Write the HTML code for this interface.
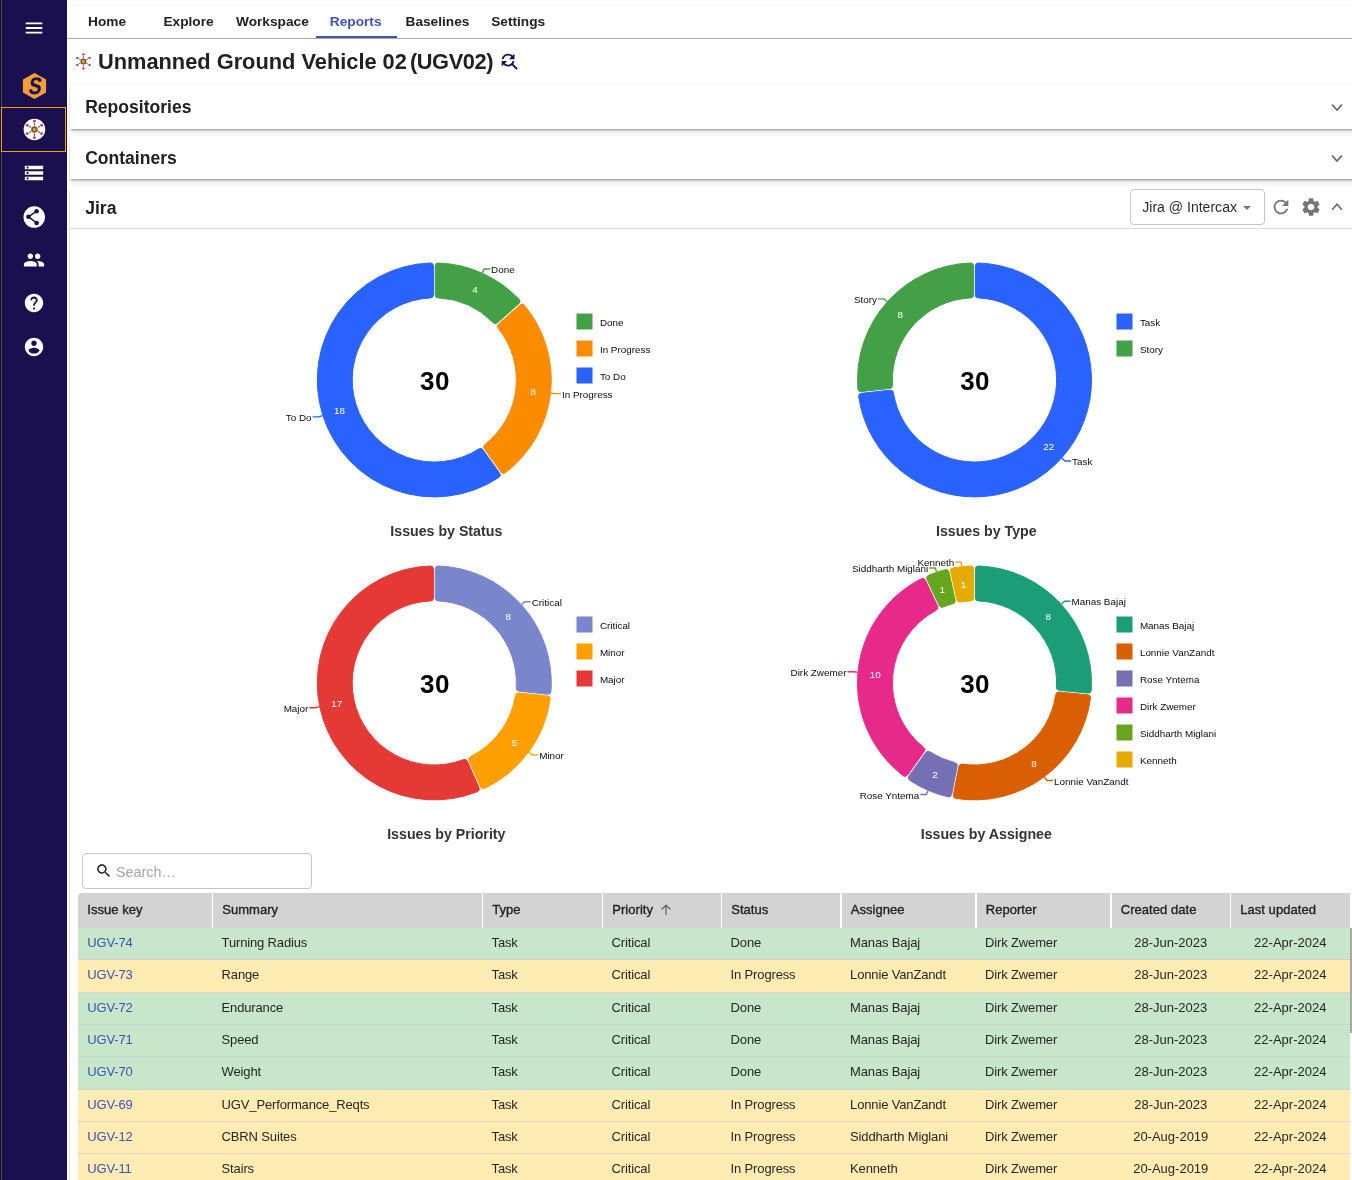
<!DOCTYPE html>
<html lang="en">
<head>
<meta charset="utf-8">
<title>Unmanned Ground Vehicle 02 (UGV02) - Reports</title>
<style>
*{box-sizing:border-box;margin:0;padding:0}
html,body{width:1352px;height:1180px;overflow:hidden;background:#fff}
body{font-family:"Liberation Sans",Arial,Helvetica,sans-serif;color:#212121;position:relative}
.abs{position:absolute}
#root{position:absolute;left:0;top:0;width:1352px;height:1180px;overflow:hidden;will-change:transform}
#sidebar{position:absolute;left:0;top:0;width:67px;height:1180px;background:#1a1050}
#sidebar .edge{position:absolute;left:0;top:0;width:1px;height:1180px;background:#141414}
#sidebar .edge2{position:absolute;left:1px;top:0;width:1px;height:1180px;background:#6f6a90;opacity:.55}
#sidebar .sel{position:absolute;left:1px;top:107px;width:65px;height:45px;border:1px solid #f5a000}
#nav{position:absolute;left:67px;top:0;width:1285px;height:39px;border-bottom:1px solid #a9a9a9;background:#fff}
#nav span{position:absolute;top:13.5px;font-size:13.7px;font-weight:bold;line-height:16px;color:#212121;white-space:nowrap}
#nav .act{color:#3f51b5}
#nav .ul{position:absolute;left:249px;top:36px;width:81px;height:2px;background:#3f51b5}
#topshade{position:absolute;left:69px;top:5px;width:1283px;height:1px;background:#f6f6f6}
#title{position:absolute;left:98px;top:48.8px;font-size:21.8px;font-weight:bold;line-height:26px;color:#212121;white-space:nowrap}
#title b{margin-left:-3px;letter-spacing:-.4px}
.panel{position:absolute;left:70px;width:1290px;background:#fff;box-shadow:0 2px 2px -1px rgba(0,0,0,.34),0 3px 5px 0 rgba(0,0,0,.13),0 0 2px 0 rgba(0,0,0,.1)}
.panel.first{border-radius:4px 4px 0 0}
.panel h3{position:absolute;left:15.2px;font-size:17.55px;font-weight:bold;line-height:20px;color:#212121}
#sel{position:absolute;left:1130px;top:189px;width:135px;height:36px;border:1px solid #c4c4c4;border-radius:4px;background:#fff}
#sel span{position:absolute;left:11.3px;top:8.5px;font-size:14.05px;line-height:17px;color:#2a2a2a;white-space:nowrap}
#sel i{position:absolute;left:112.3px;top:15.6px;width:0;height:0;border-left:4.4px solid transparent;border-right:4.4px solid transparent;border-top:4.6px solid #757575}
.ctitle{position:absolute;width:300px;text-align:center;font-size:14.2px;font-weight:bold;color:#333;line-height:16px;white-space:nowrap}
#search{position:absolute;left:82px;top:853px;width:230px;height:36px;border:1px solid #c4c4c4;border-radius:4px;background:#fff}
#search span{position:absolute;left:33px;top:9.5px;font-size:14.35px;line-height:17px;color:#a5a5a5}
.th-bg{position:absolute;background:#d3d3d3;border-radius:4px 0 0 0}
.th{position:absolute;font-size:13px;font-weight:normal;-webkit-text-stroke:.35px #222;letter-spacing:.05px;color:#222;padding-bottom:1.5px;display:flex;align-items:center;white-space:nowrap}
.vsep{position:absolute;width:1.5px;background:#fff}
.tr{position:absolute;border-bottom:1px solid rgba(200,200,215,.6)}
.tr.g{background:#c8e6c9}
.tr.y{background:#ffecb3}
.td{position:absolute;font-size:13px;letter-spacing:-.15px;color:#262626;padding-bottom:2.8px;display:flex;align-items:center;white-space:nowrap}
.td.lk{color:#3f51b5}
.td.ctr{justify-content:center;letter-spacing:0}
#scroll{position:absolute;left:1350px;top:927.6px;width:2px;height:105.6px;background:#a8a8a8}
svg text{font-family:"Liberation Sans",Arial,Helvetica,sans-serif}
</style>
</head>
<body>
<div id="root">
<div id="sidebar">
  <div class="edge"></div><div class="edge2"></div>
  <div class="sel"></div>
  <svg style="position:absolute;left:22.8px;top:16.85px" width="22" height="22" viewBox="0 0 24 24" ><path fill="#fff" d="M3 18h18v-2H3v2zm0-5h18v-2H3v2zm0-7v2h18V6H3z"/></svg>
  <svg style="position:absolute;left:21px;top:72px" width="27" height="28" viewBox="0 0 27 28"><path d="M13.5,1 L25.1,7.5 L25.1,20.5 L13.5,27 L1.9,20.5 L1.9,7.5 Z" fill="#f39c3c"/><text x="0" y="0" text-anchor="middle" font-size="24.5" font-weight="bold" fill="#1a1050" stroke="#1a1050" stroke-width=".25" transform="translate(13.4 22) skewX(-8) scale(.78 .97)">S</text></svg>
  <svg style="position:absolute;left:20.91px;top:116.21px" width="26.88" height="26.88" viewBox="-12 -12 24 24"><circle r="9.64" fill="#fff"/><path d="M0.00,-3.60L0.00,-5.60" stroke="#444" stroke-width="0.9"/><circle cx="0.00" cy="-7.40" r="1.25" fill="#c9344c"/><path d="M3.12,-1.80L4.85,-2.80" stroke="#444" stroke-width="0.9"/><circle cx="6.41" cy="-3.70" r="1.25" fill="#c9344c"/><path d="M3.12,1.80L4.85,2.80" stroke="#444" stroke-width="0.9"/><circle cx="6.41" cy="3.70" r="1.25" fill="#c9344c"/><path d="M0.00,3.60L0.00,5.60" stroke="#444" stroke-width="0.9"/><circle cx="0.00" cy="7.40" r="1.25" fill="#c9344c"/><path d="M-3.12,1.80L-4.85,2.80" stroke="#444" stroke-width="0.9"/><circle cx="-6.41" cy="3.70" r="1.25" fill="#c9344c"/><path d="M-3.12,-1.80L-4.85,-2.80" stroke="#444" stroke-width="0.9"/><circle cx="-6.41" cy="-3.70" r="1.25" fill="#c9344c"/><circle r="2.9" fill="#7a5a1e"/><circle r="1.4" fill="#f0964a"/></svg>
  <svg style="position:absolute;left:22.75px;top:162.2px" width="22" height="22" viewBox="0 0 24 24" ><path fill="#fff" d="M2 20h20v-4H2v4zm2-3h2v2H4v-2zM2 4v4h20V4H2zm4 3H4V5h2v2zm-4 7h20v-4H2v4zm2-3h2v2H4v-2z"/></svg>
  <svg style="position:absolute;left:0;top:195px" width="67" height="45" viewBox="0 195 67 45"><circle cx="34.25" cy="217.1" r="10.75" fill="#fff"/><path d="M36.6,211.3L28.45,216.7L36.6,223" fill="none" stroke="#1a1050" stroke-width="1.5"/><circle cx="28.45" cy="216.7" r="2.3" fill="#1a1050"/><circle cx="36.6" cy="211.3" r="2.3" fill="#1a1050"/><circle cx="36.6" cy="223" r="2.3" fill="#1a1050"/></svg>
  <svg style="position:absolute;left:22.9px;top:248.85px" width="22" height="22" viewBox="0 0 24 24" ><path fill="#fff" d="M16 11c1.66 0 2.99-1.34 2.99-3S17.66 5 16 5c-1.66 0-3 1.34-3 3s1.34 3 3 3zm-8 0c1.66 0 2.99-1.34 2.99-3S9.66 5 8 5C6.34 5 5 6.34 5 8s1.34 3 3 3zm0 2c-2.33 0-7 1.17-7 3.5V19h14v-2.5c0-2.33-4.67-3.5-7-3.5zm8 0c-.29 0-.62.02-.97.05 1.16.84 1.97 1.97 1.97 3.45V19h6v-2.5c0-2.33-4.67-3.5-7-3.5z"/></svg>
  <svg style="position:absolute;left:22.9px;top:291.8px" width="22" height="22" viewBox="0 0 24 24" ><path fill="#fff" d="M12 2C6.48 2 2 6.48 2 12s4.48 10 10 10 10-4.48 10-10S17.52 2 12 2zm1 17h-2v-2h2v2zm2.07-7.75l-.9.92C13.45 12.9 13 13.5 13 15h-2v-.5c0-1.1.45-2.1 1.17-2.83l1.24-1.26c.37-.36.59-.86.59-1.41 0-1.1-.9-2-2-2s-2 .9-2 2H8c0-2.21 1.79-4 4-4s4 1.79 4 4c0 .88-.36 1.68-.93 2.25z"/></svg>
  <svg style="position:absolute;left:22.9px;top:335.8px" width="22" height="22" viewBox="0 0 24 24" ><path fill="#fff" d="M12 2C6.48 2 2 6.48 2 12s4.48 10 10 10 10-4.48 10-10S17.52 2 12 2zm0 3c1.66 0 3 1.34 3 3s-1.34 3-3 3-3-1.34-3-3 1.34-3 3-3zm0 14.2c-2.5 0-4.71-1.28-6-3.22.03-1.99 4-3.08 6-3.08 1.99 0 5.97 1.09 6 3.08-1.29 1.94-3.5 3.22-6 3.22z"/></svg>
</div>
<div id="nav">
  <span style="left:21px">Home</span>
  <span style="left:96.4px">Explore</span>
  <span style="left:169px">Workspace</span>
  <span class="act" style="left:262.8px">Reports</span>
  <span style="left:338.5px">Baselines</span>
  <span style="left:424.2px">Settings</span>
  <div class="ul"></div>
</div>
<div id="topshade"></div>
<svg style="position:absolute;left:72.30px;top:50.20px" width="22.80" height="22.80" viewBox="-12 -12 24 24"><path d="M0.00,-3.60L0.00,-5.60" stroke="#444" stroke-width="0.9"/><circle cx="0.00" cy="-7.40" r="1.25" fill="#c9344c"/><path d="M3.12,-1.80L4.85,-2.80" stroke="#444" stroke-width="0.9"/><circle cx="6.41" cy="-3.70" r="1.25" fill="#c9344c"/><path d="M3.12,1.80L4.85,2.80" stroke="#444" stroke-width="0.9"/><circle cx="6.41" cy="3.70" r="1.25" fill="#c9344c"/><path d="M0.00,3.60L0.00,5.60" stroke="#444" stroke-width="0.9"/><circle cx="0.00" cy="7.40" r="1.25" fill="#c9344c"/><path d="M-3.12,1.80L-4.85,2.80" stroke="#444" stroke-width="0.9"/><circle cx="-6.41" cy="3.70" r="1.25" fill="#c9344c"/><path d="M-3.12,-1.80L-4.85,-2.80" stroke="#444" stroke-width="0.9"/><circle cx="-6.41" cy="-3.70" r="1.25" fill="#c9344c"/><circle r="2.5" fill="#f08c4a" stroke="#6b4a10" stroke-width="1.3"/></svg>
<div id="title">Unmanned Ground Vehicle 02 <b>(UGV02)</b></div>
<svg style="position:absolute;left:497.6px;top:49.7px" width="22" height="22" viewBox="0 0 24 24" ><path fill="#1a1050" d="M11 6c1.38 0 2.63.56 3.54 1.46L12 10h6V4l-2.05 2.05C14.68 4.78 12.93 4 11 4c-3.53 0-6.43 2.61-6.92 6H6.1c.46-2.28 2.48-4 4.9-4zm5.64 9.14c.66-.9 1.12-1.97 1.28-3.14H15.9c-.46 2.28-2.48 4-4.9 4-1.38 0-2.63-.56-3.54-1.46L10 12H4v6l2.05-2.05C7.32 17.22 9.07 18 11 18c1.55 0 2.98-.51 4.14-1.36L20 21.49 21.49 20l-4.85-4.86z"/></svg>
<div class="panel first" style="top:85px;height:44px"><h3 style="top:12px">Repositories</h3></div>
<div class="panel" style="top:136px;height:43px"><h3 style="top:12px">Containers</h3></div>
<div class="panel" id="jira" style="top:185.5px;height:1000px"><h3 style="top:12.2px">Jira</h3>
<div class="abs" style="left:0;top:42.5px;width:1290px;height:1px;background:#dcdcdc"></div>
</div>
<svg style="position:absolute;left:0;top:0;overflow:visible" width="1" height="1"><path d="M1332.10,104.60L1337.00,110.00L1341.90,104.60" fill="none" stroke="#666" stroke-width="1.6"/></svg> <svg style="position:absolute;left:0;top:0;overflow:visible" width="1" height="1"><path d="M1332.10,155.60L1337.00,161.00L1341.90,155.60" fill="none" stroke="#666" stroke-width="1.6"/></svg> <svg style="position:absolute;left:0;top:0;overflow:visible" width="1" height="1"><path d="M1332.10,209.70L1337.00,204.30L1341.90,209.70" fill="none" stroke="#666" stroke-width="1.6"/></svg>
<div id="sel"><span>Jira @ Intercax</span><i></i></div>
<svg style="position:absolute;left:1269.86px;top:195.77px" width="22" height="22" viewBox="0 0 24 24" ><path fill="#757575" d="M17.65 6.35C16.2 4.9 14.21 4 12 4c-4.42 0-7.99 3.58-7.99 8s3.57 8 7.99 8c3.73 0 6.84-2.55 7.73-6h-2.08c-.82 2.33-3.04 4-5.65 4-3.31 0-6-2.69-6-6s2.69-6 6-6c1.66 0 3.14.69 4.22 1.78L13 11h7V4l-2.35 2.35z"/></svg>
<svg style="position:absolute;left:1299.7px;top:195.5px" width="22" height="22" viewBox="0 0 24 24" ><path fill="#757575" d="M19.14 12.94c.04-.3.06-.61.06-.94 0-.32-.02-.64-.07-.94l2.03-1.58c.18-.14.23-.41.12-.61l-1.92-3.32c-.12-.22-.37-.29-.59-.22l-2.39.96c-.5-.38-1.03-.7-1.62-.94l-.36-2.54c-.04-.24-.24-.41-.48-.41h-3.84c-.24 0-.43.17-.47.41l-.36 2.54c-.59.24-1.13.57-1.62.94l-2.39-.96c-.22-.08-.47 0-.59.22L2.74 8.87c-.12.21-.08.47.12.61l2.03 1.58c-.05.3-.09.63-.09.94s.02.64.07.94l-2.03 1.58c-.18.14-.23.41-.12.61l1.92 3.32c.12.22.37.29.59.22l2.39-.96c.5.38 1.03.7 1.62.94l.36 2.54c.05.24.24.41.48.41h3.84c.24 0 .44-.17.47-.41l.36-2.54c.59-.24 1.13-.56 1.62-.94l2.39.96c.22.08.47 0 .59-.22l1.92-3.32c.12-.22.07-.47-.12-.61l-2.01-1.58zM12 15.6c-1.98 0-3.6-1.62-3.6-3.6s1.62-3.6 3.6-3.6 3.6 1.62 3.6 3.6-1.62 3.6-3.6 3.6z"/></svg>
<svg class="abs" style="left:0;top:0" width="1352" height="860" viewBox="0 0 1352 860">
<path d="M435.17,265.97A3,3 0 0 1 438.28,262.97A117,117 0 0 1 519.13,299.32A3,3 0 0 1 518.95,303.63L497.31,322.83A3,3 0 0 1 493.17,322.67A82.1,82.1 0 0 0 438.04,297.89A3,3 0 0 1 435.17,294.89Z" fill="#43a047" stroke="#43a047" stroke-width="1"/>
<path d="M520.11,304.94A3,3 0 0 1 524.41,305.27A117,117 0 0 1 505.34,472.86A3,3 0 0 1 501.08,472.22L484.31,448.65A3,3 0 0 1 484.9,444.55A82.1,82.1 0 0 0 498.13,328.26A3,3 0 0 1 498.47,324.13Z" fill="#fb8c00" stroke="#fb8c00" stroke-width="1"/>
<path d="M499.65,473.23A3,3 0 0 1 498.86,477.47A117,117 0 1 1 430.32,262.97A3,3 0 0 1 433.43,265.97L433.43,294.89A3,3 0 0 1 430.56,297.89A82.1,82.1 0 1 0 478.81,448.89A3,3 0 0 1 482.88,449.67Z" fill="#2962ff" stroke="#2962ff" stroke-width="1"/>
<text x="475.12" y="293.21" fill="#fff" text-anchor="middle" font-size="9.9">4</text>
<path d="M482.48,272.73L484.12,269.09L490.12,269.09" fill="none" stroke="#43a047" stroke-width="1.45"/>
<text x="491.12" y="273.19" fill="#0a0a0a" text-anchor="start" font-size="9.9">Done</text>
<text x="533.21" y="395.25" fill="#fff" text-anchor="middle" font-size="9.9">8</text>
<path d="M551.05,393.18L555.02,393.63L561.02,393.63" fill="none" stroke="#fb8c00" stroke-width="1.45"/>
<text x="562.02" y="397.73" fill="#0a0a0a" text-anchor="start" font-size="9.9">In Progress</text>
<text x="339.47" y="414.3" fill="#fff" text-anchor="middle" font-size="9.9">18</text>
<path d="M322.37,415.66L318.56,416.88L312.56,416.88" fill="none" stroke="#2962ff" stroke-width="1.45"/>
<text x="311.56" y="420.98" fill="#0a0a0a" text-anchor="end" font-size="9.9">To Do</text>
<text x="434.9" y="390.2" fill="#000" text-anchor="middle" font-size="26" letter-spacing=".5" font-weight="bold">30</text>
<rect x="576.5" y="313.5" width="16" height="16" fill="#43a047"/>
<text x="599.9" y="325.8" fill="#0a0a0a" font-size="9.9">Done</text>
<rect x="576.5" y="340.5" width="16" height="16" fill="#fb8c00"/>
<text x="599.9" y="352.8" fill="#0a0a0a" font-size="9.9">In Progress</text>
<rect x="576.5" y="367.5" width="16" height="16" fill="#2962ff"/>
<text x="599.9" y="379.8" fill="#0a0a0a" font-size="9.9">To Do</text>
<path d="M975.37,265.97A3,3 0 0 1 978.48,262.97A117,117 0 1 1 858.72,396.74A3,3 0 0 1 861.36,393.32L890.1,390.14A3,3 0 0 1 893.4,392.65A82.1,82.1 0 1 0 978.24,297.89A3,3 0 0 1 975.37,294.89Z" fill="#2962ff" stroke="#2962ff" stroke-width="1"/>
<path d="M861.16,391.59A3,3 0 0 1 857.84,388.83A117,117 0 0 1 970.52,262.97A3,3 0 0 1 973.63,265.97L973.63,294.89A3,3 0 0 1 970.76,297.89A82.1,82.1 0 0 0 892.57,385.22A3,3 0 0 1 889.91,388.4Z" fill="#43a047" stroke="#43a047" stroke-width="1"/>
<text x="1048.67" y="450.4" fill="#fff" text-anchor="middle" font-size="9.9">22</text>
<path d="M1062.04,458.27L1065.02,460.94L1071.02,460.94" fill="none" stroke="#2962ff" stroke-width="1.45"/>
<text x="1072.02" y="465.04" fill="#0a0a0a" text-anchor="start" font-size="9.9">Task</text>
<text x="900.33" y="317.6" fill="#fff" text-anchor="middle" font-size="9.9">8</text>
<path d="M886.96,301.53L883.98,298.86L877.98,298.86" fill="none" stroke="#43a047" stroke-width="1.45"/>
<text x="876.98" y="302.96" fill="#0a0a0a" text-anchor="end" font-size="9.9">Story</text>
<text x="975.1" y="390.2" fill="#000" text-anchor="middle" font-size="26" letter-spacing=".5" font-weight="bold">30</text>
<rect x="1116.5" y="313.5" width="16" height="16" fill="#2962ff"/>
<text x="1139.9" y="325.8" fill="#0a0a0a" font-size="9.9">Task</text>
<rect x="1116.5" y="340.5" width="16" height="16" fill="#43a047"/>
<text x="1139.9" y="352.8" fill="#0a0a0a" font-size="9.9">Story</text>
<path d="M435.17,568.97A3,3 0 0 1 438.28,565.97A117,117 0 0 1 550.99,691.45A3,3 0 0 1 547.67,694.22L518.92,691.12A3,3 0 0 1 516.24,687.96A82.1,82.1 0 0 0 438.04,600.89A3,3 0 0 1 435.17,597.89Z" fill="#7986cb" stroke="#7986cb" stroke-width="1"/>
<path d="M547.49,695.95A3,3 0 0 1 550.14,699.36A117,117 0 0 1 484.59,788.54A3,3 0 0 1 480.55,787.03L469.01,760.51A3,3 0 0 1 470.44,756.62A82.1,82.1 0 0 0 515.44,695.39A3,3 0 0 1 518.73,692.86Z" fill="#ffa000" stroke="#ffa000" stroke-width="1"/>
<path d="M478.95,787.72A3,3 0 0 1 477.3,791.71A117,117 0 1 1 430.32,565.97A3,3 0 0 1 433.43,568.97L433.43,597.89A3,3 0 0 1 430.56,600.89A82.1,82.1 0 1 0 463.59,759.6A3,3 0 0 1 467.41,761.2Z" fill="#e53935" stroke="#e53935" stroke-width="1"/>
<text x="508.36" y="620.48" fill="#fff" text-anchor="middle" font-size="9.9">8</text>
<path d="M521.72,604.38L524.69,601.71L530.69,601.71" fill="none" stroke="#7986cb" stroke-width="1.45"/>
<text x="531.69" y="605.81" fill="#0a0a0a" text-anchor="start" font-size="9.9">Critical</text>
<text x="514.51" y="745.96" fill="#fff" text-anchor="middle" font-size="9.9">5</text>
<path d="M528.98,752.49L532.2,754.86L538.2,754.86" fill="none" stroke="#ffa000" stroke-width="1.45"/>
<text x="539.2" y="758.96" fill="#0a0a0a" text-anchor="start" font-size="9.9">Minor</text>
<text x="336.84" y="707.28" fill="#fff" text-anchor="middle" font-size="9.9">17</text>
<path d="M319.26,706.84L315.35,707.65L309.35,707.65" fill="none" stroke="#e53935" stroke-width="1.45"/>
<text x="308.35" y="711.75" fill="#0a0a0a" text-anchor="end" font-size="9.9">Major</text>
<text x="434.9" y="693.2" fill="#000" text-anchor="middle" font-size="26" letter-spacing=".5" font-weight="bold">30</text>
<rect x="576.5" y="616.5" width="16" height="16" fill="#7986cb"/>
<text x="599.9" y="628.8" fill="#0a0a0a" font-size="9.9">Critical</text>
<rect x="576.5" y="643.5" width="16" height="16" fill="#ffa000"/>
<text x="599.9" y="655.8" fill="#0a0a0a" font-size="9.9">Minor</text>
<rect x="576.5" y="670.5" width="16" height="16" fill="#e53935"/>
<text x="599.9" y="682.8" fill="#0a0a0a" font-size="9.9">Major</text>
<path d="M975.37,568.97A3,3 0 0 1 978.48,565.97A117,117 0 0 1 1091.26,690.31A3,3 0 0 1 1087.98,693.11L1059.19,690.3A3,3 0 0 1 1056.49,687.16A82.1,82.1 0 0 0 978.24,600.89A3,3 0 0 1 975.37,597.89Z" fill="#1b9e77" stroke="#1b9e77" stroke-width="1"/>
<path d="M1087.81,694.85A3,3 0 0 1 1090.49,698.23A117,117 0 0 1 955.77,798.39A3,3 0 0 1 953.3,794.85L958.9,766.47A3,3 0 0 1 962.29,764.09A82.1,82.1 0 0 0 1055.76,694.59A3,3 0 0 1 1059.02,692.04Z" fill="#d95f02" stroke="#d95f02" stroke-width="1"/>
<path d="M951.59,794.51A3,3 0 0 1 947.97,796.85A117,117 0 0 1 909.7,780.31A3,3 0 0 1 908.92,776.07L925.75,752.55A3,3 0 0 1 929.82,751.78A82.1,82.1 0 0 0 954.96,762.64A3,3 0 0 1 957.19,766.14Z" fill="#7570b3" stroke="#7570b3" stroke-width="1"/>
<path d="M907.5,775.06A3,3 0 0 1 903.23,775.69A117,117 0 0 1 921.26,578.71A3,3 0 0 1 925.34,580.11L937.62,606.3A3,3 0 0 1 936.3,610.23A82.1,82.1 0 0 0 923.74,747.43A3,3 0 0 1 924.33,751.53Z" fill="#e7298a" stroke="#e7298a" stroke-width="1"/>
<path d="M926.92,579.37A3,3 0 0 1 928.46,575.34A117,117 0 0 1 945.19,569.63A3,3 0 0 1 948.87,571.88L955.16,600.11A3,3 0 0 1 953.02,603.66A82.1,82.1 0 0 0 943.07,607.06A3,3 0 0 1 939.2,605.56Z" fill="#66a61e" stroke="#66a61e" stroke-width="1"/>
<path d="M950.58,571.5A3,3 0 0 1 952.95,567.9A117,117 0 0 1 970.52,565.97A3,3 0 0 1 973.63,568.97L973.63,597.89A3,3 0 0 1 970.76,600.89A82.1,82.1 0 0 0 960.31,602.04A3,3 0 0 1 956.87,599.73Z" fill="#e6ab02" stroke="#e6ab02" stroke-width="1"/>
<text x="1048.24" y="620.12" fill="#fff" text-anchor="middle" font-size="9.9">8</text>
<path d="M1061.53,603.96L1064.49,601.27L1070.49,601.27" fill="none" stroke="#1b9e77" stroke-width="1.45"/>
<text x="1071.49" y="605.37" fill="#0a0a0a" text-anchor="start" font-size="9.9">Manas Bajaj</text>
<text x="1033.9" y="766.89" fill="#fff" text-anchor="middle" font-size="9.9">8</text>
<path d="M1044.61,777.19L1046.99,780.4L1052.99,780.4" fill="none" stroke="#d95f02" stroke-width="1.45"/>
<text x="1053.99" y="784.5" fill="#0a0a0a" text-anchor="start" font-size="9.9">Lonnie VanZandt</text>
<text x="935.01" y="778.38" fill="#fff" text-anchor="middle" font-size="9.9">2</text>
<path d="M927.89,790.76L926.3,794.43L920.3,794.43" fill="none" stroke="#7570b3" stroke-width="1.45"/>
<text x="919.3" y="798.53" fill="#0a0a0a" text-anchor="end" font-size="9.9">Rose Yntema</text>
<text x="875.36" y="677.93" fill="#fff" text-anchor="middle" font-size="9.9">10</text>
<path d="M857.49,672.19L853.51,671.82L847.51,671.82" fill="none" stroke="#e7298a" stroke-width="1.45"/>
<text x="846.51" y="675.92" fill="#0a0a0a" text-anchor="end" font-size="9.9">Dirk Zwemer</text>
<text x="942.35" y="592.78" fill="#fff" text-anchor="middle" font-size="9.9">1</text>
<path d="M936.56,571.7L935.26,567.91L929.26,567.91" fill="none" stroke="#66a61e" stroke-width="1.45"/>
<text x="928.26" y="572.01" fill="#0a0a0a" text-anchor="end" font-size="9.9">Siddharth Miglani</text>
<text x="963.61" y="588.05" fill="#fff" text-anchor="middle" font-size="9.9">1</text>
<path d="M961.65,566.11L961.21,562.13L955.21,562.13" fill="none" stroke="#e6ab02" stroke-width="1.45"/>
<text x="954.21" y="566.23" fill="#0a0a0a" text-anchor="end" font-size="9.9">Kenneth</text>
<text x="975.1" y="693.2" fill="#000" text-anchor="middle" font-size="26" letter-spacing=".5" font-weight="bold">30</text>
<rect x="1116.5" y="616.5" width="16" height="16" fill="#1b9e77"/>
<text x="1139.9" y="628.8" fill="#0a0a0a" font-size="9.9">Manas Bajaj</text>
<rect x="1116.5" y="643.5" width="16" height="16" fill="#d95f02"/>
<text x="1139.9" y="655.8" fill="#0a0a0a" font-size="9.9">Lonnie VanZandt</text>
<rect x="1116.5" y="670.5" width="16" height="16" fill="#7570b3"/>
<text x="1139.9" y="682.8" fill="#0a0a0a" font-size="9.9">Rose Yntema</text>
<rect x="1116.5" y="697.5" width="16" height="16" fill="#e7298a"/>
<text x="1139.9" y="709.8" fill="#0a0a0a" font-size="9.9">Dirk Zwemer</text>
<rect x="1116.5" y="724.5" width="16" height="16" fill="#66a61e"/>
<text x="1139.9" y="736.8" fill="#0a0a0a" font-size="9.9">Siddharth Miglani</text>
<rect x="1116.5" y="751.5" width="16" height="16" fill="#e6ab02"/>
<text x="1139.9" y="763.8" fill="#0a0a0a" font-size="9.9">Kenneth</text>
</svg>
<div class="ctitle" style="left:296.3px;top:523px">Issues by Status</div>
<div class="ctitle" style="left:836.3px;top:523px">Issues by Type</div>
<div class="ctitle" style="left:296.3px;top:826px">Issues by Priority</div>
<div class="ctitle" style="left:836.3px;top:826px">Issues by Assignee</div>
<div id="search"><svg style="position:absolute;left:11.7px;top:7.9px" width="17.5" height="17.5" viewBox="0 0 24 24" ><path fill="#222" d="M15.5 14h-.79l-.28-.27C15.41 12.59 16 11.11 16 9.5 16 5.91 13.09 3 9.5 3S3 5.91 3 9.5 5.91 16 9.5 16c1.61 0 3.09-.59 4.23-1.57l.27.28v.79l5 4.99L20.49 19l-4.99-5zm-6 0C7.01 14 5 11.99 5 9.5S7.01 5 9.5 5 14 7.01 14 9.5 11.99 14 9.5 14z"/></svg><span>Search…</span></div>
<div class="th-bg" style="left:78px;top:893.25px;width:1272px;height:34.65px"></div>
<div class="th" style="left:87.3px;top:893.25px;width:124.5px;height:34.65px">Issue key</div>
<div class="th" style="left:222.2px;top:893.25px;width:260.0px;height:34.65px">Summary</div>
<div class="vsep" style="left:211.5px;top:893.25px;height:34.65px"></div>
<div class="th" style="left:492.2px;top:893.25px;width:110.0px;height:34.65px">Type</div>
<div class="vsep" style="left:481.5px;top:893.25px;height:34.65px"></div>
<div class="th" style="left:612.2px;top:893.25px;width:109.0px;height:34.65px">Priority</div>
<div class="vsep" style="left:601.5px;top:893.25px;height:34.65px"></div>
<div class="th" style="left:731.2px;top:893.25px;width:109.5px;height:34.65px">Status</div>
<div class="vsep" style="left:720.5px;top:893.25px;height:34.65px"></div>
<div class="th" style="left:850.7px;top:893.25px;width:125px;height:34.65px">Assignee</div>
<div class="vsep" style="left:840px;top:893.25px;height:34.65px"></div>
<div class="th" style="left:985.7px;top:893.25px;width:125px;height:34.65px">Reporter</div>
<div class="vsep" style="left:975px;top:893.25px;height:34.65px"></div>
<div class="th" style="left:1120.7px;top:893.25px;width:109.5px;height:34.65px">Created date</div>
<div class="vsep" style="left:1110px;top:893.25px;height:34.65px"></div>
<div class="th" style="left:1240.2px;top:893.25px;width:109.5px;height:34.65px">Last updated</div>
<div class="vsep" style="left:1229.5px;top:893.25px;height:34.65px"></div>
<div class="tr g" style="left:78px;top:928px;width:1272px;height:32px"></div>
<div class="td lk" style="left:87.3px;top:927.9px;width:124.5px;height:32.3px">UGV-74</div>
<div class="td" style="left:221.6px;top:927.9px;width:260.0px;height:32.3px">Turning Radius</div>
<div class="td" style="left:491.6px;top:927.9px;width:110.0px;height:32.3px">Task</div>
<div class="td" style="left:611.6px;top:927.9px;width:109.0px;height:32.3px">Critical</div>
<div class="td" style="left:730.6px;top:927.9px;width:109.5px;height:32.3px">Done</div>
<div class="td" style="left:850.1px;top:927.9px;width:125px;height:32.3px">Manas Bajaj</div>
<div class="td" style="left:985.1px;top:927.9px;width:125px;height:32.3px">Dirk Zwemer</div>
<div class="td ctr" style="left:1111px;top:927.9px;width:119.5px;height:32.3px">28-Jun-2023</div>
<div class="td ctr" style="left:1230.5px;top:927.9px;width:119.5px;height:32.3px">22-Apr-2024</div>
<div class="tr y" style="left:78px;top:960px;width:1272px;height:33px"></div>
<div class="td lk" style="left:87.3px;top:960.2px;width:124.5px;height:32.3px">UGV-73</div>
<div class="td" style="left:221.6px;top:960.2px;width:260.0px;height:32.3px">Range</div>
<div class="td" style="left:491.6px;top:960.2px;width:110.0px;height:32.3px">Task</div>
<div class="td" style="left:611.6px;top:960.2px;width:109.0px;height:32.3px">Critical</div>
<div class="td" style="left:730.6px;top:960.2px;width:109.5px;height:32.3px">In Progress</div>
<div class="td" style="left:850.1px;top:960.2px;width:125px;height:32.3px">Lonnie VanZandt</div>
<div class="td" style="left:985.1px;top:960.2px;width:125px;height:32.3px">Dirk Zwemer</div>
<div class="td ctr" style="left:1111px;top:960.2px;width:119.5px;height:32.3px">28-Jun-2023</div>
<div class="td ctr" style="left:1230.5px;top:960.2px;width:119.5px;height:32.3px">22-Apr-2024</div>
<div class="tr g" style="left:78px;top:993px;width:1272px;height:32px"></div>
<div class="td lk" style="left:87.3px;top:992.6px;width:124.5px;height:32.3px">UGV-72</div>
<div class="td" style="left:221.6px;top:992.6px;width:260.0px;height:32.3px">Endurance</div>
<div class="td" style="left:491.6px;top:992.6px;width:110.0px;height:32.3px">Task</div>
<div class="td" style="left:611.6px;top:992.6px;width:109.0px;height:32.3px">Critical</div>
<div class="td" style="left:730.6px;top:992.6px;width:109.5px;height:32.3px">Done</div>
<div class="td" style="left:850.1px;top:992.6px;width:125px;height:32.3px">Manas Bajaj</div>
<div class="td" style="left:985.1px;top:992.6px;width:125px;height:32.3px">Dirk Zwemer</div>
<div class="td ctr" style="left:1111px;top:992.6px;width:119.5px;height:32.3px">28-Jun-2023</div>
<div class="td ctr" style="left:1230.5px;top:992.6px;width:119.5px;height:32.3px">22-Apr-2024</div>
<div class="tr g" style="left:78px;top:1025px;width:1272px;height:32px"></div>
<div class="td lk" style="left:87.3px;top:1024.9px;width:124.5px;height:32.3px">UGV-71</div>
<div class="td" style="left:221.6px;top:1024.9px;width:260.0px;height:32.3px">Speed</div>
<div class="td" style="left:491.6px;top:1024.9px;width:110.0px;height:32.3px">Task</div>
<div class="td" style="left:611.6px;top:1024.9px;width:109.0px;height:32.3px">Critical</div>
<div class="td" style="left:730.6px;top:1024.9px;width:109.5px;height:32.3px">Done</div>
<div class="td" style="left:850.1px;top:1024.9px;width:125px;height:32.3px">Manas Bajaj</div>
<div class="td" style="left:985.1px;top:1024.9px;width:125px;height:32.3px">Dirk Zwemer</div>
<div class="td ctr" style="left:1111px;top:1024.9px;width:119.5px;height:32.3px">28-Jun-2023</div>
<div class="td ctr" style="left:1230.5px;top:1024.9px;width:119.5px;height:32.3px">22-Apr-2024</div>
<div class="tr g" style="left:78px;top:1057px;width:1272px;height:33px"></div>
<div class="td lk" style="left:87.3px;top:1057.2px;width:124.5px;height:32.3px">UGV-70</div>
<div class="td" style="left:221.6px;top:1057.2px;width:260.0px;height:32.3px">Weight</div>
<div class="td" style="left:491.6px;top:1057.2px;width:110.0px;height:32.3px">Task</div>
<div class="td" style="left:611.6px;top:1057.2px;width:109.0px;height:32.3px">Critical</div>
<div class="td" style="left:730.6px;top:1057.2px;width:109.5px;height:32.3px">Done</div>
<div class="td" style="left:850.1px;top:1057.2px;width:125px;height:32.3px">Manas Bajaj</div>
<div class="td" style="left:985.1px;top:1057.2px;width:125px;height:32.3px">Dirk Zwemer</div>
<div class="td ctr" style="left:1111px;top:1057.2px;width:119.5px;height:32.3px">28-Jun-2023</div>
<div class="td ctr" style="left:1230.5px;top:1057.2px;width:119.5px;height:32.3px">22-Apr-2024</div>
<div class="tr y" style="left:78px;top:1090px;width:1272px;height:32px"></div>
<div class="td lk" style="left:87.3px;top:1089.5px;width:124.5px;height:32.3px">UGV-69</div>
<div class="td" style="left:221.6px;top:1089.5px;width:260.0px;height:32.3px">UGV_Performance_Reqts</div>
<div class="td" style="left:491.6px;top:1089.5px;width:110.0px;height:32.3px">Task</div>
<div class="td" style="left:611.6px;top:1089.5px;width:109.0px;height:32.3px">Critical</div>
<div class="td" style="left:730.6px;top:1089.5px;width:109.5px;height:32.3px">In Progress</div>
<div class="td" style="left:850.1px;top:1089.5px;width:125px;height:32.3px">Lonnie VanZandt</div>
<div class="td" style="left:985.1px;top:1089.5px;width:125px;height:32.3px">Dirk Zwemer</div>
<div class="td ctr" style="left:1111px;top:1089.5px;width:119.5px;height:32.3px">28-Jun-2023</div>
<div class="td ctr" style="left:1230.5px;top:1089.5px;width:119.5px;height:32.3px">22-Apr-2024</div>
<div class="tr y" style="left:78px;top:1122px;width:1272px;height:32px"></div>
<div class="td lk" style="left:87.3px;top:1121.9px;width:124.5px;height:32.3px">UGV-12</div>
<div class="td" style="left:221.6px;top:1121.9px;width:260.0px;height:32.3px">CBRN Suites</div>
<div class="td" style="left:491.6px;top:1121.9px;width:110.0px;height:32.3px">Task</div>
<div class="td" style="left:611.6px;top:1121.9px;width:109.0px;height:32.3px">Critical</div>
<div class="td" style="left:730.6px;top:1121.9px;width:109.5px;height:32.3px">In Progress</div>
<div class="td" style="left:850.1px;top:1121.9px;width:125px;height:32.3px">Siddharth Miglani</div>
<div class="td" style="left:985.1px;top:1121.9px;width:125px;height:32.3px">Dirk Zwemer</div>
<div class="td ctr" style="left:1111px;top:1121.9px;width:119.5px;height:32.3px">20-Aug-2019</div>
<div class="td ctr" style="left:1230.5px;top:1121.9px;width:119.5px;height:32.3px">22-Apr-2024</div>
<div class="tr y" style="left:78px;top:1154px;width:1272px;height:33px"></div>
<div class="td lk" style="left:87.3px;top:1154.2px;width:124.5px;height:32.3px">UGV-11</div>
<div class="td" style="left:221.6px;top:1154.2px;width:260.0px;height:32.3px">Stairs</div>
<div class="td" style="left:491.6px;top:1154.2px;width:110.0px;height:32.3px">Task</div>
<div class="td" style="left:611.6px;top:1154.2px;width:109.0px;height:32.3px">Critical</div>
<div class="td" style="left:730.6px;top:1154.2px;width:109.5px;height:32.3px">In Progress</div>
<div class="td" style="left:850.1px;top:1154.2px;width:125px;height:32.3px">Kenneth</div>
<div class="td" style="left:985.1px;top:1154.2px;width:125px;height:32.3px">Dirk Zwemer</div>
<div class="td ctr" style="left:1111px;top:1154.2px;width:119.5px;height:32.3px">20-Aug-2019</div>
<div class="td ctr" style="left:1230.5px;top:1154.2px;width:119.5px;height:32.3px">22-Apr-2024</div>
<svg style="position:absolute;left:659px;top:903.4px" width="14" height="14" viewBox="0 0 14 14"><path d="M7,12.2V2.2M2.6,6.6L7,2.2L11.4,6.6" fill="none" stroke="#6a6a6a" stroke-width="1.35"/></svg>
<div id="scroll"></div>
</div>
</body>
</html>
